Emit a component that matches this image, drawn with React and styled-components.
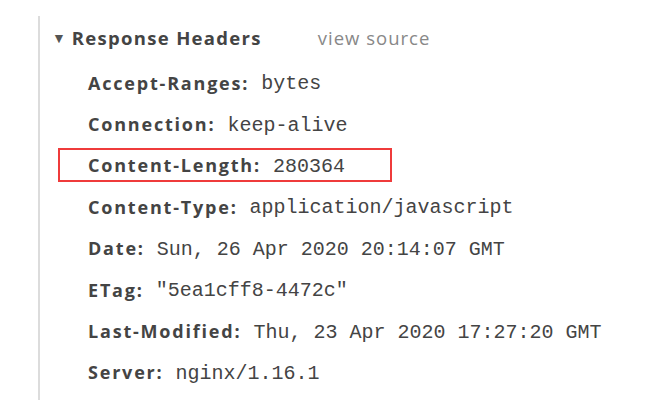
import React from "react";
import styled, {createGlobalStyle} from "styled-components";

const headers = [
    ["Accept-Ranges", "bytes"],
    ["Connection", "keep-alive"],
    ["Content-Length", "280364", true],
    ["Content-Type", "application/javascript"],
    ["Date", "Sun, 26 Apr 2020 20:14:07 GMT"],
    ["ETag", "\"5ea1cff8-4472c\""],
    ["Last-Modified", "Thu, 23 Apr 2020 17:27:20 GMT"],
    ["Server", "nginx/1.16.1"],
];

export default function App() {
    return (
        <>
            <GlobalStyle/>
            <Panel>
                <Section>
                    <Title>
                        <Arrow>▼</Arrow>
                        <TitleText>Response Headers</TitleText>
                        <ViewSource>view source</ViewSource>
                    </Title>
                    {headers.map(([key, value, marked]) => (
                        <HeaderRow key={key} $marked={marked}>
                            <HeaderKey>{key}:</HeaderKey>
                            <HeaderValue>{value}</HeaderValue>
                        </HeaderRow>
                    ))}
                </Section>
            </Panel>
        </>
    );
}

const GlobalStyle = createGlobalStyle`
    html, body {
        margin: 0;
        background: #fff;
        width: 645px;
        height: 400px;
        overflow: hidden;
    }
`;

const Panel = styled.div`
    padding: 16px 0 0 38px;
`;

const Section = styled.div`
    border-left: 2px solid #dcdcdc;
    height: 384px;
    font-family: "Open Sans", "Noto Sans", sans-serif;
    color: #333;
`;

const Title = styled.div`
    display: flex;
    align-items: center;
    height: 42px;
    margin-bottom: 4px;
    padding-left: 12px;
`;

const Arrow = styled.span`
    font-size: 14px;
    color: #555;
    margin-right: 6px;
`;

const TitleText = styled.span`
    font-weight: 700;
    font-size: 18.5px;
    letter-spacing: 1.3px;
    color: #444;
`;

const ViewSource = styled.span`
    margin-left: 56px;
    font-size: 18.5px;
    letter-spacing: 1px;
    color: #888;
`;

const HeaderRow = styled.div`
    display: flex;
    align-items: center;
    box-sizing: border-box;
    height: 41.4px;
    margin-left: 18px;
    padding-left: 28px;
    width: 334px;
    white-space: nowrap;
    border: 2px solid ${p => p.$marked ? "#ef3b3b" : "transparent"};
    ${p => p.$marked && "height: 34px; margin: 3.7px 0 3.7px 18px;"}
`;

const HeaderKey = styled.span`
    font-weight: 700;
    font-size: 18px;
    letter-spacing: 1.8px;
    color: #444;
`;

const HeaderValue = styled.span`
    margin-left: 12px;
    padding-top: 2px;
    font-family: "Liberation Mono", monospace;
    font-size: 20px;
    color: #444;
`;
